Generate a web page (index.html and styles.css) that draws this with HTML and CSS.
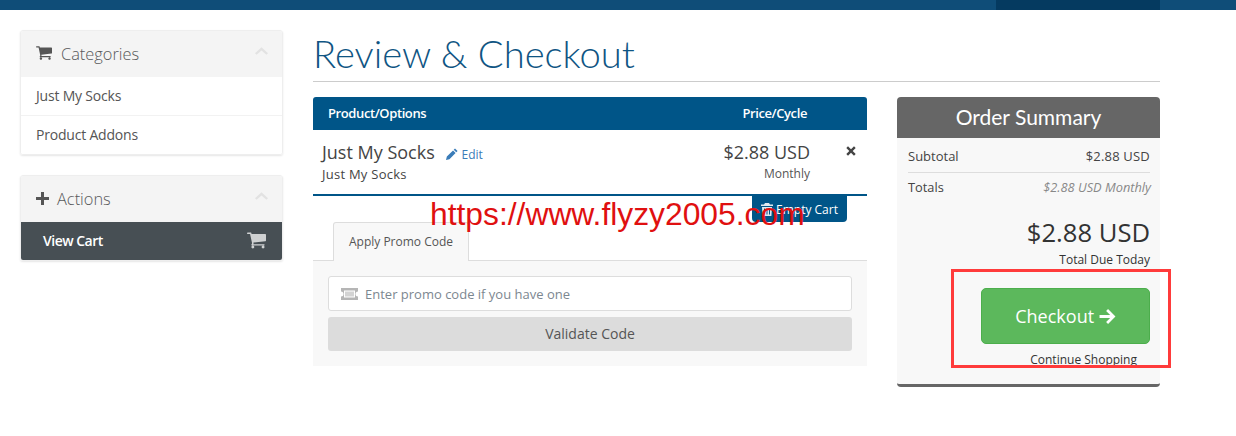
FILE: index.html
```html
<!DOCTYPE html>
<html lang="en">
<head>
<meta charset="UTF-8">
<meta name="viewport" content="width=device-width, initial-scale=1.0">
<link rel="stylesheet" href="styles.css">
<title>Review &amp; Checkout</title>
</head>
<body>
<svg class="icon-defs" width="0" height="0">
    <symbol id="cart" viewBox="0 0 1664 1664"><path d="M640 1408q0 52-38 90t-90 38-90-38-38-90 38-90 90-38 90 38 38 90zm896 0q0 52-38 90t-90 38-90-38-38-90 38-90 90-38 90 38 38 90zm128-1088v512q0 24-16.500 42.500t-40.500 21.500l-1044 122q13 60 13 70 0 16-24 64h920q26 0 45 19t19 45-19 45-45 19h-1024q-26 0-45-19t-19-45q0-11 8-31.500t16-36 21.500-40 15.500-29.500l-177-823h-204q-26 0-45-19t-19-45 19-45 45-19h256q16 0 28.500 6.500t19.500 15.500 13 24.500 8 26 5.500 29.500 4.500 26h1201q26 0 45 19t19 45z"/></symbol>
    <symbol id="chevron" viewBox="0 0 24 14"><path d="M12 0 24 11l-3 3-9-8-9 8-3-3z"/></symbol>
</svg>
<div class="top-bar"><div class="top-bar-dark"></div></div>
<div class="page">
    <aside class="sidebar">
        <div class="panel">
            <div class="panel-heading">
                <svg class="panel-icon cart-icon"><use href="#cart"/></svg>
                <span>Categories</span>
                <svg class="chevron"><use href="#chevron"/></svg>
            </div>
            <a class="panel-item">Just My Socks</a>
            <a class="panel-item">Product Addons</a>
        </div>
        <div class="panel">
            <div class="panel-heading">
                <svg class="panel-icon plus-icon" viewBox="0 0 13 13"><path d="M5 0h3v5h5v3H8v5H5V8H0V5h5z"/></svg>
                <span>Actions</span>
                <svg class="chevron"><use href="#chevron"/></svg>
            </div>
            <a class="panel-item active">
                View Cart
                <svg class="active-icon"><use href="#cart"/></svg>
            </a>
        </div>
    </aside>

    <main class="content">
        <h1>Review &amp; Checkout</h1>
        <div class="columns">
            <section class="cart">
                <div class="cart-head">
                    <span>Product/Options</span>
                    <span class="head-price">Price/Cycle</span>
                </div>
                <div class="cart-row">
                    <div class="item-info">
                        <div class="item-title">Just My Socks
                            <a class="edit-link">
                                <svg class="pencil" viewBox="0 0 14 14"><path d="M10.500 .5 13.500 3.500 12 5 9 2zM8.200 2.800l3 3L4 13 0 14l1-4z"/></svg>Edit</a>
                        </div>
                        <div class="item-group">Just My Socks</div>
                    </div>
                    <div class="item-price">
                        <div class="price-big">$2.88 USD</div>
                        <div class="price-cycle">Monthly</div>
                    </div>
                    <div class="item-remove">
                        <svg class="times" viewBox="0 0 10 10"><path d="M2 .3 5 3.300 8 .3 9.700 2 6.700 5l3 3L8 9.700l-3-3-3 3L.3 8l3-3-3-3z"/></svg>
                    </div>
                </div>
                <div class="empty-row">
                    <button class="empty-btn">
                        <svg class="trash" viewBox="0 0 12 13"><path d="M4 0h4l1 1.500h3V3H0V1.500h3zM1 4h10l-.6 9H1.600zm2 1.500v6h1v-6zm2.500 0v6h1v-6zm2.500 0v6h1v-6z"/></svg>Empty Cart
                    </button>
                </div>
                <div class="tabs">
                    <div class="tab">Apply Promo Code</div>
                </div>
                <div class="tab-body">
                    <div class="promo-input">
                        <svg class="ticket" viewBox="0 0 17 12"><path d="M0 0h17v3.500a2.500 2.500 0 0 0 0 5V12H0V8.500a2.500 2.500 0 0 0 0-5zm3 2.500v7h11v-7z"/><path d="M4 3.500h9v5H4z" opacity=".6"/></svg>
                        <span>Enter promo code if you have one</span>
                    </div>
                    <button class="validate-btn">Validate Code</button>
                </div>
            </section>

            <section class="summary">
                <h2>Order Summary</h2>
                <div class="summary-body">
                    <div class="summary-line first"><span>Subtotal</span><span class="subtotal-value">$2.88 USD</span></div>
                    <div class="summary-line second"><span>Totals</span><em>$2.88 USD Monthly</em></div>
                    <div class="total-due">$2.88 USD</div>
                    <div class="total-label">Total Due Today</div>
                    <div class="checkout-wrap">
                        <button class="checkout-btn">Checkout
                            <svg class="arrow" viewBox="0 0 16 14"><path d="M8.500 0 15.500 7l-7 7-1.800-1.800L10.500 8.300H.5V5.700h10L6.700 1.800z"/></svg>
                        </button>
                        <a class="continue-link">Continue Shopping</a>
                    </div>
                </div>
            </section>
        </div>
    </main>
</div>
<div class="watermark">https://www.flyzy2005.com</div>
<div class="highlight"></div>
</body>
</html>
```

FILE: styles.css
```css
body {
    font-family: "Open Sans", Arial, sans-serif;
    margin: 0;
    padding: 0;
    background-color: #ffffff;
    color: #333;
    font-size: 13px;
}

button {
    font-family: inherit;
    border: none;
}

.icon-defs {
    position: absolute;
}

.top-bar {
    height: 10px;
    background-color: #0f4d78;
    display: flex;
    justify-content: flex-end;
    padding-right: 76px;
}

.top-bar-dark {
    width: 164px;
    background-color: #053a60;
}

.page {
    display: flex;
    padding: 20px 76px 0 20px;
    gap: 30px;
}

.sidebar {
    width: 263px;
    flex-shrink: 0;
    display: flex;
    flex-direction: column;
    gap: 20px;
}

.panel {
    border: 1px solid #eee;
    border-radius: 3px;
    box-shadow: 0 1px 2px rgba(0, 0, 0, 0.1);
    overflow: hidden;
}

.panel-heading {
    height: 46px;
    box-sizing: border-box;
    background-color: #f4f4f4;
    display: flex;
    align-items: center;
    padding: 0 14px 2px 15px;
    font-size: 16.400px;
    font-weight: 300;
    color: #58595b;
}

.panel-icon {
    fill: #555;
}

.cart-icon {
    width: 16px;
    height: 16px;
    margin-right: 9px;
}

.plus-icon {
    width: 13px;
    height: 13px;
    margin-right: 8px;
}

.chevron {
    width: 13px;
    height: 8px;
    margin-left: auto;
    margin-top: -4px;
    fill: #e2e2e2;
}

.panel-item {
    display: flex;
    align-items: center;
    height: 38px;
    box-sizing: border-box;
    padding: 0 15px 2px;
    font-size: 14px;
    letter-spacing: -0.2px;
    color: #555;
    background-color: #fff;
}

.panel-item + .panel-item {
    height: 39px;
    border-top: 1px solid #f2f2f2;
}

.panel-item.active {
    background-color: #474f54;
    color: #fff;
    font-weight: 600;
    letter-spacing: -0.5px;
    padding: 0 16px 1px 22px;
    justify-content: space-between;
}

.active-icon {
    width: 19px;
    height: 19px;
    fill: #cfd1d2;
}

.content {
    flex: 1;
}

h1 {
    font-family: Lato, "Open Sans", sans-serif;
    font-weight: 300;
    font-size: 38.200px;
    line-height: 42px;
    color: #0f5583;
    margin: 2px 0 0 0;
    padding-bottom: 7px;
    border-bottom: 1px solid #ccc;
}

.columns {
    display: flex;
    justify-content: space-between;
    margin-top: 15px;
}

.cart {
    width: 554px;
}

.cart-head {
    height: 33px;
    box-sizing: border-box;
    padding: 0 60px 2px 15px;
    background-color: #058;
    color: #fff;
    border-radius: 3px 3px 0 0;
    display: flex;
    align-items: center;
    justify-content: space-between;
    font-weight: 600;
    font-size: 13px;
    letter-spacing: -0.4px;
}

.cart-row {
    height: 64px;
    border-bottom: 2px solid #058;
    display: flex;
    padding: 0 11px 0 9px;
}

.item-info {
    flex: 1;
    padding-top: 11px;
}

.item-title {
    font-size: 18px;
    line-height: 23px;
    color: #444;
}

.edit-link {
    font-size: 12px;
    color: #3a7cb8;
    margin-left: 7px;
}

.pencil {
    width: 12px;
    height: 12px;
    fill: #3a7cb8;
    margin-right: 3px;
    vertical-align: -1px;
}

.item-group {
    font-size: 13px;
    line-height: 16px;
    letter-spacing: 0.25px;
    color: #444;
}

.item-price {
    text-align: right;
    padding-top: 11px;
    padding-right: 36px;
}

.price-big {
    font-size: 18px;
    line-height: 23px;
    color: #444;
}

.price-cycle {
    font-size: 12px;
    line-height: 19px;
    color: #555;
}

.item-remove {
    padding-top: 16px;
}

.times {
    width: 10px;
    height: 10px;
    fill: #444;
    display: block;
}

.empty-row {
    display: flex;
    justify-content: flex-end;
    padding-right: 20px;
    height: 26px;
}

.empty-btn {
    width: 95px;
    height: 26px;
    background-color: #058;
    color: #fff;
    font-size: 12px;
    border-radius: 0 0 4px 4px;
    padding: 0;
    white-space: nowrap;
}

.trash {
    width: 12px;
    height: 13px;
    fill: #dfe9f0;
    margin-right: 3px;
    vertical-align: -2px;
}

.tabs {
    height: 38px;
    padding-left: 20px;
    border-bottom: 1px solid #ddd;
    display: flex;
}

.tab {
    width: 134px;
    height: 38px;
    border: 1px solid #ddd;
    border-bottom: none;
    border-radius: 3px 3px 0 0;
    background-color: #f8f8f8;
    font-size: 12px;
    line-height: 38px;
    text-align: center;
    color: #555;
}

.tab-body {
    background-color: #f8f8f8;
    height: 105px;
    box-sizing: border-box;
    padding: 15px;
    display: flex;
    flex-direction: column;
    gap: 6px;
}

.promo-input {
    height: 35px;
    box-sizing: border-box;
    background-color: #fff;
    border: 1px solid #ddd;
    border-radius: 3px;
    display: flex;
    align-items: center;
    padding: 0 12px;
    gap: 7px;
    color: #7c8790;
    font-size: 13px;
}

.ticket {
    width: 17px;
    height: 12px;
    fill: #b5b5b5;
}

.validate-btn {
    height: 34px;
    padding: 0 0 1px;
    background-color: #dcdcdc;
    border-radius: 3px;
    color: #555;
    font-size: 14px;
}

.summary {
    width: 263px;
    height: 290px;
    border-radius: 4px;
    overflow: hidden;
    background-color: #f8f8f8;
    border-bottom: 3px solid #666;
    box-sizing: border-box;
}

.summary h2 {
    margin: 0;
    height: 41px;
    background-color: #666;
    color: #fff;
    font-family: Lato, "Open Sans", sans-serif;
    font-weight: 400;
    font-size: 21px;
    line-height: 39px;
    text-align: center;
}

.summary-body {
    padding: 0 10px 0 11px;
}

.summary-line {
    display: flex;
    justify-content: space-between;
    height: 35px;
    padding-top: 10px;
    box-sizing: border-box;
    font-size: 13px;
    line-height: 17px;
    color: #444;
}

.summary-line.first {
    border-bottom: 1px solid #ddd;
}

.subtotal-value {
    letter-spacing: 0.2px;
}

.summary-line.second {
    padding-top: 6px;
    font-size: 12.800px;
}

.summary-line em {
    color: #888;
    margin-right: -1px;
}

.total-due {
    text-align: right;
    font-size: 25.600px;
    line-height: 33px;
    color: #333;
    margin-top: 8px;
}

.total-label {
    text-align: right;
    font-size: 12px;
    line-height: 17px;
    color: #333;
    margin-top: 2px;
}

.checkout-wrap {
    display: flex;
    flex-direction: column;
    align-items: flex-end;
    margin-top: 20px;
}

.checkout-btn {
    width: 169px;
    height: 56px;
    background-color: #5cb85c;
    border: 1px solid #4cae4c;
    border-radius: 5px;
    color: #fff;
    font-size: 18px;
}

.arrow {
    width: 17px;
    height: 15px;
    fill: #fff;
    vertical-align: -1px;
}

.continue-link {
    font-size: 12px;
    line-height: 17px;
    color: #333;
    margin: 7px 13px 0 0;
}

.watermark {
    position: absolute;
    left: 430px;
    top: 196px;
    font-family: "Liberation Sans", Arial, sans-serif;
    font-size: 31.800px;
    line-height: 36px;
    color: #e01010;
    white-space: nowrap;
}

.highlight {
    position: absolute;
    left: 951px;
    top: 269px;
    width: 214px;
    height: 93px;
    border: 3px solid #ff3b3b;
}
```
